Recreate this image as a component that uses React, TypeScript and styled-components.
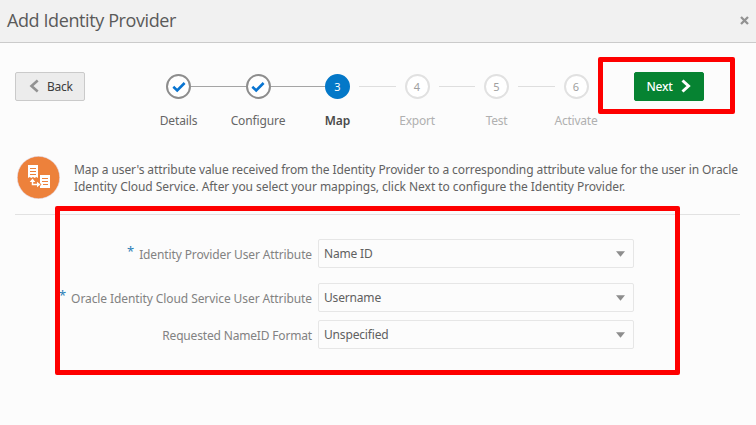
import React from "react";
import styled, { createGlobalStyle, css } from "styled-components";

const GlobalStyle = createGlobalStyle`
  * { box-sizing: border-box; }
  html, body { margin: 0; padding: 0; }
  body {
    background: #fcfcfc;
    overflow: hidden;
    font-family: "Noto Sans", "Open Sans", sans-serif;
    font-size: 12px;
    color: #555;
  }
`;

const Dialog = styled.div`
  position: relative;
  width: 756px;
  height: 425px;
  overflow: hidden;
  background: #fcfcfc;
`;

const Header = styled.header`
  display: flex;
  align-items: center;
  justify-content: space-between;
  height: 43px;
  padding: 0 7px 3px;
  background: #f1f1f1;
  border-bottom: 1px solid #cbcbcb;
`;

const Title = styled.h1`
  margin: 0;
  font-family: "Open Sans", sans-serif;
  font-size: 18px;
  font-weight: 400;
  line-height: 24px;
  letter-spacing: -0.4px;
  color: #5a5a5a;
`;

const CloseButton = styled.button`
  display: flex;
  padding: 0;
  margin-top: 2px;
  border: 0;
  background: none;
`;

const Toolbar = styled.div`
  display: flex;
  align-items: flex-start;
  height: 106px;
  padding: 29px 0 0 15px;
`;

const NavButton = styled.button<{ $primary?: boolean }>`
  display: flex;
  align-items: center;
  flex: none;
  gap: 8px;
  width: 70px;
  height: 29px;
  padding: 0 0 1px 13px;
  border: 1px solid #cacaca;
  border-radius: 2px;
  background: #ececec;
  color: #3c3c3c;
  font: 400 12px "Noto Sans", sans-serif;
  letter-spacing: -0.25px;
  ${(p) =>
    p.$primary &&
    css`
      padding-left: 12px;
      border-color: #068332;
      background: #068332;
      color: #fff;
      font-weight: 500;
    `}
`;

const Train = styled.ol`
  display: flex;
  flex: none;
  margin: 2px 45px 0 81px;
  padding: 0;
  list-style: none;
`;

const Step = styled.li`
  display: flex;
  flex-direction: column;
  align-items: center;
  flex: none;
  width: 25px;
`;

type StepState = "done" | "current" | "pending";

const Marker = styled.span<{ $state: StepState }>`
  display: flex;
  align-items: center;
  justify-content: center;
  width: 25px;
  height: 25px;
  border: 2px solid #8d8d8d;
  border-radius: 50%;
  background: #fff;
  font-size: 11px;
  line-height: 14px;
  ${(p) => p.$state === "current" && css`border-color: #0478c8; background: #0478c8; color: #fff;`}
  ${(p) => p.$state === "pending" && css`border-color: #e1e1e1; color: #a0a0a0;`}
`;

const StepLabel = styled.span<{ $state: StepState }>`
  margin-top: 13px;
  line-height: 18px;
  white-space: nowrap;
  letter-spacing: ${(p) => (p.$state === "pending" ? "-0.25px" : "-0.12px")};
  color: ${(p) => (p.$state === "pending" ? "#b0b0b0" : p.$state === "current" ? "#4a4a4a" : "#666")};
  font-weight: ${(p) => (p.$state === "current" ? 600 : 400)};
`;

const Connector = styled.li<{ $done: boolean }>`
  flex: none;
  width: ${(p) => (p.$done ? "54.5px" : "36.5px")};
  height: 1px;
  margin: ${(p) => (p.$done ? "12px 0 0" : "12px 9px 0")};
  background: ${(p) => (p.$done ? "#a5a5a5" : "#dedede")};
`;

const Intro = styled.section`
  display: flex;
  align-items: flex-start;
  height: 66px;
  margin: 0 16px 0 15px;
  padding: 7px 0 0 2px;
  border-bottom: 1px solid #e2e2e2;
`;

const IntroText = styled.p`
  margin: 5px 0 0 14px;
  line-height: 17px;
  white-space: nowrap;
  color: #626262;
`;

const Form = styled.form`
  display: flex;
  flex-direction: column;
  padding-top: 24px;
`;

const Field = styled.div<{ $gap: number }>`
  display: grid;
  grid-template-columns: 312px 316px;
  column-gap: 6px;
  align-items: center;
  height: 29px;
  margin-bottom: ${(p) => p.$gap}px;
`;

const Label = styled.label`
  display: flex;
  justify-content: flex-end;
  padding-top: 3px;
  line-height: 18px;
  white-space: nowrap;
  color: #828282;
`;

const Required = styled.span`
  margin: -4px 5px 0 0;
  color: #2c80b8;
  font-size: 13px;
`;

const Select = styled.div`
  display: flex;
  align-items: center;
  justify-content: space-between;
  height: 29px;
  padding: 0 8px 0 5px;
  border: 1px solid #e6e6e6;
  border-radius: 2px;
  letter-spacing: -0.17px;
  color: #606060;
`;

const Highlight = styled.div<{ $x: number; $y: number; $w: number; $h: number }>`
  position: absolute;
  left: ${(p) => p.$x}px;
  top: ${(p) => p.$y}px;
  width: ${(p) => p.$w}px;
  height: ${(p) => p.$h}px;
  border: 5px solid #fe0000;
  border-radius: 2px;
  pointer-events: none;
`;

const Tracked = styled.span<{ $spacing: number }>`
  letter-spacing: ${(p) => p.$spacing}px;
`;

const MapBadge = styled.svg`
  flex: none;
`;

const Check = () => (
  <svg width="14" height="12" viewBox="0 0 14 12" fill="none" stroke="#0874d1" strokeWidth="2.6">
    <path d="M1.3 5.8 5.2 9.4 12.6 2" />
  </svg>
);

const Chevron = ({ left }: { left?: boolean }) =>
  left ? (
    <svg width="10" height="14" viewBox="0 0 10 14" fill="none" stroke="#929292" strokeWidth="2.6">
      <path d="M8.700 1.500 2.500 7l6.200 5.500" />
    </svg>
  ) : (
    <svg width="10" height="14" viewBox="0 0 10 14" fill="none" stroke="#fff" strokeWidth="3">
      <path d="M1.500 1.500 7.500 7 1.500 12.500" />
    </svg>
  );

const MappingIcon = () => (
  <MapBadge width="43" height="43" viewBox="0 0 43 43">
    <circle cx="21.500" cy="21.500" r="21.200" fill="#ed813b" stroke="#e2dcec" strokeWidth=".6" />
    <g fill="#fff">
      <path d="M11 9h10v13l-1.700-1-1.600 1-1.700-1-1.700 1-1.600-1-1.700 1z" />
      <path d="M23 19h10v13H23v-2l1.500-1.500L23 27z" />
    </g>
    <path d="M13 12.500h6M13 15.500h6M13 18.500h6M25 22.500h6M25 25.500h6M26 28.500h5" stroke="#ed813b" />
    <path d="M15.500 24v4.500h5" fill="none" stroke="#fff" strokeWidth="1.500" />
    <path d="M12.700 26 15.500 22.500l2.800 3.500zM20 25.700l3.500 2.800-3.500 2.800z" fill="#fff" />
  </MapBadge>
);

const steps: { label: string; state: StepState }[] = [
  { label: "Details", state: "done" },
  { label: "Configure", state: "done" },
  { label: "Map", state: "current" },
  { label: "Export", state: "pending" },
  { label: "Test", state: "pending" },
  { label: "Activate", state: "pending" },
];

const fields = [
  { label: "Identity Provider User Attribute", value: "Name ID", required: true, gap: 15, spacing: -0.12 },
  { label: "Oracle Identity Cloud Service User Attribute", value: "Username", required: true, gap: 8, spacing: -0.09 },
  { label: "Requested NameID Format", value: "Unspecified", required: false, gap: 0, spacing: -0.17 },
];

export default function App() {
  return (
    <Dialog>
      <GlobalStyle />
      <Header>
        <Title>Add Identity Provider</Title>
        <CloseButton aria-label="Close">
          <svg width="9" height="9" viewBox="0 0 9 9" stroke="#929292" strokeWidth="2.300">
            <path d="M1 1l7 7M8 1 1 8" />
          </svg>
        </CloseButton>
      </Header>
      <Toolbar>
        <NavButton>
          <Chevron left />
          Back
        </NavButton>
        <Train>
          {steps.map((s, i) => (
            <React.Fragment key={s.label}>
              {i > 0 && <Connector $done={s.state !== "pending"} />}
              <Step>
                <Marker $state={s.state}>{s.state === "done" ? <Check /> : i + 1}</Marker>
                <StepLabel $state={s.state}>{s.label}</StepLabel>
              </Step>
            </React.Fragment>
          ))}
        </Train>
        <NavButton $primary>
          Next
          <Chevron />
        </NavButton>
      </Toolbar>
      <Intro>
        <MappingIcon />
        <IntroText>
          <Tracked $spacing={-0.09}>
            Map a user's attribute value received from the Identity Provider to a corresponding attribute value for the user in Oracle
          </Tracked>
          <br />
          <Tracked $spacing={-0.05}>
            Identity Cloud Service. After you select your mappings, click Next to configure the Identity Provider.
          </Tracked>
        </IntroText>
      </Intro>
      <Form>
        {fields.map((f) => (
          <Field key={f.label} $gap={f.gap}>
            <Label>
              {f.required && <Required>*</Required>}
              <Tracked $spacing={f.spacing}>{f.label}</Tracked>
            </Label>
            <Select role="combobox">
              {f.value}
              <svg width="9" height="6" viewBox="0 0 9 6">
                <path d="M0 .3h9L4.500 5.800z" fill="#8d8d8d" />
              </svg>
            </Select>
          </Field>
        ))}
      </Form>
      <Highlight $x={598} $y={57} $w={137} $h={57} />
      <Highlight $x={55} $y={206} $w={625} $h={169} />
    </Dialog>
  );
}
